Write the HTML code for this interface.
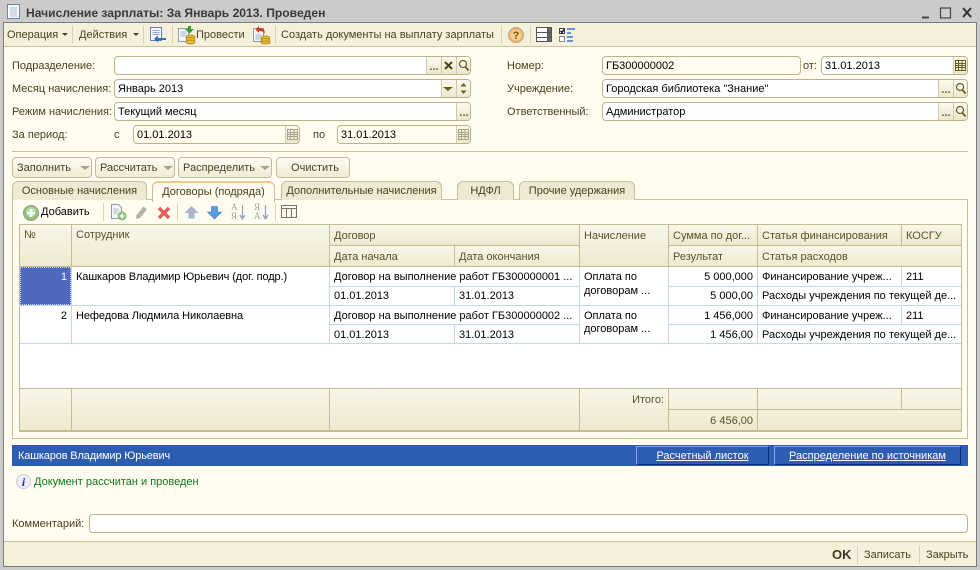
<!DOCTYPE html>
<html><head><meta charset="utf-8"><style>
html,body{margin:0;padding:0}
body{width:980px;height:570px;position:relative;overflow:hidden;background:#fffbef;font:11px/14px "Liberation Sans",Arial,sans-serif;color:#47431f}
.a{position:absolute}
.t{position:absolute;white-space:nowrap;line-height:14px}
.k{color:#000}
.h{color:#57512a}
.r{text-align:right}
.f{position:absolute;height:17px;background:#fff;border:1px solid #b9b28b;border-radius:4px;overflow:hidden;box-sizing:content-box}
.fb{position:absolute;top:0;height:17px;background:linear-gradient(#fbf9ee,#ece7cd);border-left:1px solid #cfc9a8;color:#6b5f20;text-align:center;line-height:17px;font-weight:bold}
.ft{position:absolute;left:3px;top:2px;white-space:nowrap;color:#000;line-height:14px}
.sep{position:absolute;width:1px;background:#d8d3b4}
.btn{position:absolute;top:157px;height:19px;border:1px solid #c2bb95;border-radius:4px;background:linear-gradient(#fdfbf2,#efebd6);line-height:21px;padding-left:4px;box-sizing:content-box;white-space:nowrap}
.btn i{position:absolute;right:1px;top:8px;border:5px solid transparent;border-top:4px solid #a9a487;border-bottom:0}
.tab{position:absolute;top:181px;height:18px;border:1px solid #c6bf9a;border-bottom:0;border-radius:6px 6px 0 0;background:#eee9d3;text-align:center;line-height:18px;color:#47431f;white-space:nowrap}
.hl{position:absolute;background:#c3bc94}
.bl{position:absolute;background:#c6d6ea}
.hd{position:absolute;background:linear-gradient(#f8f6ea,#eee8cd)}
svg{position:absolute;overflow:visible}
.lk{position:absolute;top:446px;height:17px;border:1px solid;border-color:#7ea6ee #0d2a78 #0d2a78 #7ea6ee;color:#fff;text-decoration:underline;text-align:center;line-height:19px;white-space:nowrap}
</style></head><body>

<!-- window frame -->
<div class="a" style="left:0;top:0;width:980px;height:22px;background:#cbcbcb"></div>
<div class="a" style="left:0;top:22px;width:3px;height:548px;background:#cbcbcb"></div>
<div class="a" style="left:977px;top:22px;width:3px;height:548px;background:#cbcbcb"></div>
<div class="a" style="left:3px;top:22px;width:1px;height:545px;background:#7b7b7b"></div>
<div class="a" style="left:976px;top:22px;width:1px;height:545px;background:#7b7b7b"></div>
<div class="a" style="left:3px;top:22px;width:974px;height:1px;background:#7b7b7b"></div>
<div class="a" style="left:0;top:566px;width:980px;height:4px;background:#cbcbcb"></div>
<div class="a" style="left:3px;top:566px;width:974px;height:1px;background:#7b7b7b"></div>

<svg style="left:7px;top:4px" width="14" height="15" viewBox="0 0 14 15"><rect x=".5" y=".5" width="12" height="14" fill="#f6f8fb" stroke="#6f87a6"/><path d="M3 4h7M3 6h7M3 8h7M3 10h7M3 12h7" stroke="#b3c1d2"/></svg>
<div class="t" style="left:26px;top:6px;font-weight:bold;font-size:12.1px;color:#3a3a3a">Начисление зарплаты: За Январь 2013. Проведен</div>
<svg style="left:920px;top:5px" width="52" height="14" viewBox="0 0 52 14"><path d="M2 12.5h7" stroke="#444" stroke-width="2"/><rect x="20.5" y="3" width="10" height="10" fill="none" stroke="#444" stroke-width="1.200"/><path d="M43 3l8 9M51 3l-8 9" stroke="#333" stroke-width="2"/></svg>

<!-- top toolbar -->
<div class="a" style="left:4px;top:23px;width:972px;height:23px;background:#f4f0dc"></div>
<div class="a" style="left:4px;top:46px;width:972px;height:1px;background:#c9c3a0"></div>
<div class="t" style="left:7px;top:28px">Операция</div>
<div class="a" style="left:62px;top:33px;border:3px solid transparent;border-top:3px solid #47431f;border-bottom:0"></div>
<div class="sep" style="left:72px;top:26px;height:18px"></div>
<div class="t" style="left:79px;top:28px">Действия</div>
<div class="a" style="left:133px;top:33px;border:3px solid transparent;border-top:3px solid #47431f;border-bottom:0"></div>
<div class="sep" style="left:143px;top:26px;height:18px"></div>
<svg style="left:150px;top:27px" width="17" height="17" viewBox="0 0 17 17"><rect x=".5" y=".5" width="11" height="13" fill="#f4f7fb" stroke="#5f7fa8"/><path d="M2.500 3.500h7M2.500 5.500h7M2.500 7.500h7" stroke="#8fa6c4"/><path d="M16 11H8V8.500L4 12l4 3.500V13h8z" fill="#2f70b8"/></svg>
<div class="sep" style="left:172px;top:26px;height:18px"></div>
<svg style="left:178px;top:26px" width="18" height="18" viewBox="0 0 18 18"><rect x=".5" y="2.500" width="10" height="13" fill="#f4f7fb" stroke="#8b9bb0"/><path d="M2.500 6h6M2.500 8h6M2.500 10h5" stroke="#a6b5c6"/><path d="M10 0h3v3h3l-4.500 4.500L7 3h3z" fill="#3f9a3a"/><ellipse cx="12.500" cy="11" rx="4.500" ry="2" fill="#e7bf3a" stroke="#a37e12" stroke-width=".7"/><ellipse cx="12.500" cy="13.500" rx="4.500" ry="2" fill="#e7bf3a" stroke="#a37e12" stroke-width=".7"/><ellipse cx="12.500" cy="16" rx="4.500" ry="2" fill="#e7bf3a" stroke="#a37e12" stroke-width=".7"/></svg>
<div class="t" style="left:196px;top:28px">Провести</div>
<svg style="left:253px;top:26px" width="18" height="18" viewBox="0 0 18 18"><rect x=".5" y="2.500" width="10" height="13" fill="#f4f7fb" stroke="#8b9bb0"/><path d="M2.500 9h6M2.500 11h6M2.500 13h5" stroke="#a6b5c6"/><path d="M6 0L2.500 3.500 6 7V5c3 0 5 1 5.500 3C12.500 4 10 2 6 2z" fill="#cf3a2c"/><ellipse cx="12.500" cy="12" rx="4.500" ry="2" fill="#e7bf3a" stroke="#a37e12" stroke-width=".7"/><ellipse cx="12.500" cy="14.500" rx="4.500" ry="2" fill="#e7bf3a" stroke="#a37e12" stroke-width=".7"/><ellipse cx="12.500" cy="16.500" rx="4.500" ry="1.500" fill="#e7bf3a" stroke="#a37e12" stroke-width=".7"/></svg>
<div class="sep" style="left:275px;top:26px;height:18px"></div>
<div class="t" style="left:281px;top:28px">Создать документы на выплату зарплаты</div>
<div class="sep" style="left:501px;top:26px;height:18px"></div>
<svg style="left:508px;top:27px" width="16" height="16" viewBox="0 0 16 16"><circle cx="8" cy="8" r="7.500" fill="#f0b46a" stroke="#b4a98a"/><circle cx="8" cy="8" r="5.500" fill="#f7cf8e"/><text x="8" y="12" text-anchor="middle" font-family="Liberation Sans" font-weight="bold" font-size="11" fill="#7a4c10">?</text></svg>
<div class="sep" style="left:530px;top:26px;height:18px"></div>
<svg style="left:536px;top:27px" width="16" height="16" viewBox="0 0 16 16"><rect x=".5" y=".5" width="15" height="14" fill="#fff" stroke="#555"/><path d="M0 5.500h16M0 10.500h16M11.500 0v15" stroke="#555"/><rect x="12" y="1" width="3" height="4" fill="#666"/><rect x="12" y="6" width="3" height="4" fill="#666"/><rect x="12" y="11" width="3" height="3" fill="#666"/></svg>
<svg style="left:559px;top:27px" width="17" height="16" viewBox="0 0 17 16"><rect x=".5" y="1.500" width="5" height="5" fill="#fff" stroke="#444"/><path d="M1.500 4l1.500 1.500L5 2.500" stroke="#000" fill="none" stroke-width="1.300"/><rect x=".5" y="9.500" width="5" height="5" fill="#fff" stroke="#888"/><path d="M8 2h8M8 6h4M8 10h6M8 14h6" stroke="#2f78d0" stroke-width="1.600"/></svg>

<!-- form labels -->
<div class="t" style="left:12px;top:59px">Подразделение:</div>
<div class="t" style="left:12px;top:82px">Месяц начисления:</div>
<div class="t" style="left:12px;top:105px">Режим начисления:</div>
<div class="t" style="left:12px;top:128px">За период:</div>
<div class="t" style="left:114px;top:128px">с</div>
<div class="t" style="left:313px;top:128px">по</div>
<div class="t" style="left:507px;top:59px">Номер:</div>
<div class="t" style="left:507px;top:82px">Учреждение:</div>
<div class="t" style="left:507px;top:105px">Ответственный:</div>
<div class="t" style="left:803px;top:59px">от:</div>

<!-- fields -->
<div class="f" style="left:114px;top:56px;width:355px">
 <div class="fb" style="left:311px;width:14px;line-height:21px">...</div>
 <div class="fb" style="left:326px;width:14px"></div>
 <div class="fb" style="left:341px;width:14px"></div>
 <svg style="left:329px;top:4px" width="9" height="9"><path d="M1 1l7 7M8 1l-7 7" stroke="#4c4418" stroke-width="2"/></svg>
 <svg style="left:343px;top:2px" width="12" height="13"><circle cx="5" cy="5" r="3.500" fill="#fff" stroke="#6b5f20" stroke-width="1.300"/><path d="M7.500 8l3 3.500" stroke="#6b5f20" stroke-width="1.800"/></svg>
</div>
<div class="f" style="left:114px;top:79px;width:355px"><div class="ft">Январь 2013</div>
 <div class="fb" style="left:326px;width:14px"></div>
 <div class="fb" style="left:341px;width:14px"></div>
 <div class="a" style="left:328px;top:7px;border:5px solid transparent;border-top:4px solid #6b5f20;border-bottom:0"></div>
 <svg style="left:344px;top:2px" width="9" height="13"><path d="M4.500 1l3 3.500h-6zM4.500 12l3-3.500h-6z" fill="#6b5f20"/></svg>
</div>
<div class="f" style="left:114px;top:102px;width:355px"><div class="ft">Текущий месяц</div>
 <div class="fb" style="left:341px;width:14px;line-height:21px">...</div>
</div>
<div class="f" style="left:133px;top:125px;width:165px;background:#fffbef"><div class="ft">01.01.2013</div>
 <div class="fb" style="left:151px;width:14px"></div>
 <svg style="left:153px;top:3px" width="11" height="11"><path d="M.5.500h10v10H.5zM0 3.500h11M0 5.500h11M0 7.500h11M3.500 1v10M7 1v10" fill="none" stroke="#a8a388"/></svg>
</div>
<div class="f" style="left:337px;top:125px;width:132px;background:#fffbef"><div class="ft">31.01.2013</div>
 <div class="fb" style="left:118px;width:14px"></div>
 <svg style="left:120px;top:3px" width="11" height="11"><path d="M.5.500h10v10H.5zM0 3.500h11M0 5.500h11M0 7.500h11M3.500 1v10M7 1v10" fill="none" stroke="#a8a388"/></svg>
</div>
<div class="f" style="left:602px;top:56px;width:197px;background:#fffbef"><div class="ft">ГБ300000002</div></div>
<div class="f" style="left:821px;top:56px;width:145px"><div class="ft">31.01.2013</div>
 <div class="fb" style="left:131px;width:14px"></div>
 <svg style="left:133px;top:3px" width="11" height="11"><path d="M.5.500h10v10H.5zM0 3.500h11M0 5.500h11M0 7.500h11M3.500 1v10M7 1v10" fill="none" stroke="#6b5f20"/></svg>
</div>
<div class="f" style="left:602px;top:79px;width:364px"><div class="ft">Городская библиотека "Знание"</div>
 <div class="fb" style="left:335px;width:14px;line-height:21px">...</div>
 <div class="fb" style="left:350px;width:14px"></div>
 <svg style="left:352px;top:2px" width="12" height="13"><circle cx="5" cy="5" r="3.500" fill="#fff" stroke="#6b5f20" stroke-width="1.300"/><path d="M7.500 8l3 3.500" stroke="#6b5f20" stroke-width="1.800"/></svg>
</div>
<div class="f" style="left:602px;top:102px;width:364px"><div class="ft">Администратор</div>
 <div class="fb" style="left:335px;width:14px;line-height:21px">...</div>
 <div class="fb" style="left:350px;width:14px"></div>
 <svg style="left:352px;top:2px" width="12" height="13"><circle cx="5" cy="5" r="3.500" fill="#fff" stroke="#6b5f20" stroke-width="1.300"/><path d="M7.500 8l3 3.500" stroke="#6b5f20" stroke-width="1.800"/></svg>
</div>

<div class="a" style="left:12px;top:151px;width:956px;height:1px;background:#c6bf9a"></div>

<!-- buttons -->
<div class="btn" style="left:12px;width:74px">Заполнить<i></i></div>
<div class="btn" style="left:95px;width:74px">Рассчитать<i></i></div>
<div class="btn" style="left:178px;width:88px">Распределить<i></i></div>
<div class="btn" style="left:276px;width:68px;padding-left:4px;text-align:center">Очистить</div>

<!-- tabs -->
<div class="a" style="left:12px;top:199px;width:954px;height:238px;border:1px solid #c6bf9a"></div>
<div class="tab" style="left:12px;width:133px">Основные начисления</div>
<div class="tab" style="left:281px;width:159px">Дополнительные начисления</div>
<div class="tab" style="left:457px;width:55px">НДФЛ</div>
<div class="tab" style="left:519px;width:114px">Прочие удержания</div>
<div class="tab" style="left:152px;width:121px;height:19px;background:#fffbef;border-top:2px solid #f2c98a;top:181px;line-height:18px">Договоры (подряда)</div>

<!-- table toolbar -->
<svg style="left:23px;top:205px" width="16" height="16" viewBox="0 0 16 16"><circle cx="8" cy="8" r="7.500" fill="#8fc47e" stroke="#9a9a86"/><circle cx="8" cy="7" r="5" fill="#b5dca6"/><path d="M8 4v8M4 8h8" stroke="#fff" stroke-width="2.600"/></svg>
<div class="t k" style="left:41px;top:205px"><u>Д</u>обавить</div>
<div class="sep" style="left:103px;top:203px;height:18px"></div>
<svg style="left:111px;top:204px" width="16" height="17" viewBox="0 0 16 17"><path d="M.5.500h7l3 3v11H.5z" fill="#f3f5f8" stroke="#8d9cb0"/><path d="M2.500 5h5M2.500 7h5M2.500 9h4" stroke="#a9b6c6"/><circle cx="11" cy="12" r="4.500" fill="#86bd76"/><path d="M11 9.500v5M8.500 12h5" stroke="#fff" stroke-width="1.600"/></svg>
<svg style="left:135px;top:205px" width="13" height="15" viewBox="0 0 13 15"><path d="M8.500 1.500l3.500 3-7 8.500-4 1 .5-4z" fill="#b3b5a3"/></svg>
<svg style="left:157px;top:206px" width="14" height="14" viewBox="0 0 14 14"><path d="M2 2l10 10M12 2L2 12" stroke="#e2605a" stroke-width="3.400"/></svg>
<div class="sep" style="left:177px;top:203px;height:18px"></div>
<svg style="left:184px;top:205px" width="15" height="15" viewBox="0 0 15 15"><path d="M7.500 1L14.500 8H10.500v5.500h-6V8H.5z" fill="#a5b8ca"/></svg>
<svg style="left:207px;top:205px" width="15" height="15" viewBox="0 0 15 15"><path d="M7.500 14L14.500 7H10.500V1.500h-6V7H.5z" fill="#5a9be0" stroke="#4077b8" stroke-width=".6"/></svg>
<div class="t" style="left:231px;top:203px;font:9px/9px 'Liberation Serif',serif;color:#a89e9e">А<br>Я</div>
<svg style="left:239px;top:205px" width="7" height="16"><path d="M3.500 0v13M1 10l2.500 4L6 10" fill="none" stroke="#8aa2bd" stroke-width="1.200"/></svg>
<div class="t" style="left:254px;top:203px;font:9px/9px 'Liberation Serif',serif;color:#a89e9e">Я<br>А</div>
<svg style="left:262px;top:205px" width="7" height="16"><path d="M3.500 0v13M1 10l2.500 4L6 10" fill="none" stroke="#8aa2bd" stroke-width="1.200"/></svg>
<div class="sep" style="left:275px;top:203px;height:18px"></div>
<svg style="left:281px;top:205px" width="17" height="14" viewBox="0 0 17 14"><path d="M.5.500h15v12H.5zM.5 3.500h15M5.500 3.500v9M10.500 3.500v9" fill="#fff8ea" stroke="#777566"/></svg>

<!-- table -->
<div class="a" style="left:19px;top:224px;width:941px;height:206px;border:1px solid #c3bc94;background:#fff"></div>
<!-- header backgrounds -->
<div class="hd" style="left:20px;top:225px;width:941px;height:42px"></div>
<div class="hd" style="left:330px;top:225px;width:249px;height:20px"></div>
<div class="hd" style="left:330px;top:246px;width:249px;height:21px"></div>
<div class="hd" style="left:669px;top:225px;width:292px;height:20px"></div>
<div class="hd" style="left:669px;top:246px;width:292px;height:21px"></div>
<div class="hl" style="left:71px;top:225px;width:1px;height:42px"></div>
<div class="hl" style="left:329px;top:225px;width:1px;height:42px"></div>
<div class="hl" style="left:454px;top:245px;width:1px;height:22px"></div>
<div class="hl" style="left:579px;top:225px;width:1px;height:42px"></div>
<div class="hl" style="left:668px;top:225px;width:1px;height:42px"></div>
<div class="hl" style="left:757px;top:225px;width:1px;height:42px"></div>
<div class="hl" style="left:901px;top:225px;width:1px;height:20px"></div>
<div class="hl" style="left:329px;top:245px;width:250px;height:1px"></div>
<div class="hl" style="left:668px;top:245px;width:293px;height:1px"></div>
<div class="hl" style="left:20px;top:266px;width:941px;height:1px"></div>

<div class="t h" style="left:24px;top:228px">№</div>
<div class="t h" style="left:76px;top:228px">Сотрудник</div>
<div class="t h" style="left:334px;top:229px">Договор</div>
<div class="t h" style="left:334px;top:250px">Дата начала</div>
<div class="t h" style="left:459px;top:250px">Дата окончания</div>
<div class="t h" style="left:584px;top:229px">Начисление</div>
<div class="t h" style="left:673px;top:229px">Сумма по дог...</div>
<div class="t h" style="left:673px;top:250px">Результат</div>
<div class="t h" style="left:762px;top:229px">Статья финансирования</div>
<div class="t h" style="left:762px;top:250px">Статья расходов</div>
<div class="t h" style="left:906px;top:229px">КОСГУ</div>

<!-- body grid -->
<div class="bl" style="left:20px;top:305px;width:941px;height:1px"></div>
<div class="bl" style="left:20px;top:343px;width:941px;height:1px"></div>
<div class="bl" style="left:329px;top:286px;width:250px;height:1px"></div>
<div class="bl" style="left:329px;top:324px;width:250px;height:1px"></div>
<div class="bl" style="left:668px;top:286px;width:293px;height:1px"></div>
<div class="bl" style="left:668px;top:324px;width:293px;height:1px"></div>
<div class="bl" style="left:71px;top:267px;width:1px;height:76px"></div>
<div class="bl" style="left:329px;top:267px;width:1px;height:76px"></div>
<div class="bl" style="left:579px;top:267px;width:1px;height:76px"></div>
<div class="bl" style="left:668px;top:267px;width:1px;height:76px"></div>
<div class="bl" style="left:757px;top:267px;width:1px;height:76px"></div>
<div class="bl" style="left:454px;top:286px;width:1px;height:19px"></div>
<div class="bl" style="left:454px;top:324px;width:1px;height:19px"></div>
<div class="bl" style="left:901px;top:267px;width:1px;height:19px"></div>
<div class="bl" style="left:901px;top:305px;width:1px;height:19px"></div>

<div class="a" style="left:20px;top:267px;width:49px;height:36px;background:#4f69bf;border:1px dotted #c9d2ee"></div>
<div class="t r" style="left:20px;top:270px;width:47px;color:#fff">1</div>
<div class="t k r" style="left:20px;top:309px;width:47px">2</div>

<div class="t k" style="left:76px;top:270px;letter-spacing:-.1px">Кашкаров Владимир Юрьевич (дог. подр.)</div>
<div class="t k" style="left:76px;top:309px;letter-spacing:-.07px">Нефедова Людмила Николаевна</div>
<div class="t k" style="left:334px;top:270px">Договор на выполнение работ ГБ300000001 ...</div>
<div class="t k" style="left:334px;top:309px">Договор на выполнение работ ГБ300000002 ...</div>
<div class="t k" style="left:334px;top:289px">01.01.2013</div>
<div class="t k" style="left:459px;top:289px">31.01.2013</div>
<div class="t k" style="left:334px;top:328px">01.01.2013</div>
<div class="t k" style="left:459px;top:328px">31.01.2013</div>
<div class="t k" style="left:584px;top:270px">Оплата по</div>
<div class="t k" style="left:584px;top:284px">договорам ...</div>
<div class="t k" style="left:584px;top:309px">Оплата по</div>
<div class="t k" style="left:584px;top:322px">договорам ...</div>
<div class="t k r" style="left:669px;top:270px;width:84px">5 000,000</div>
<div class="t k r" style="left:669px;top:289px;width:84px">5 000,00</div>
<div class="t k r" style="left:669px;top:309px;width:84px">1 456,000</div>
<div class="t k r" style="left:669px;top:328px;width:84px">1 456,00</div>
<div class="t k" style="left:762px;top:270px">Финансирование учреж...</div>
<div class="t k" style="left:762px;top:289px">Расходы учреждения по текущей де...</div>
<div class="t k" style="left:762px;top:309px">Финансирование учреж...</div>
<div class="t k" style="left:762px;top:328px">Расходы учреждения по текущей де...</div>
<div class="t k" style="left:906px;top:270px">211</div>
<div class="t k" style="left:906px;top:309px">211</div>

<!-- footer -->
<div class="hd" style="left:20px;top:388px;width:941px;height:42px"></div>
<div class="hl" style="left:20px;top:388px;width:941px;height:1px"></div>
<div class="hl" style="left:71px;top:388px;width:1px;height:42px"></div>
<div class="hl" style="left:329px;top:388px;width:1px;height:42px"></div>
<div class="hl" style="left:579px;top:388px;width:1px;height:42px"></div>
<div class="hl" style="left:668px;top:388px;width:1px;height:42px"></div>
<div class="hl" style="left:757px;top:388px;width:1px;height:42px"></div>
<div class="hl" style="left:901px;top:388px;width:1px;height:21px"></div>
<div class="hl" style="left:668px;top:409px;width:293px;height:1px"></div>
<div class="hl" style="left:20px;top:430px;width:941px;height:1px"></div>
<div class="t h r" style="left:580px;top:393px;width:84px">Итого:</div>
<div class="t h r" style="left:669px;top:414px;width:84px">6 456,00</div>

<!-- blue bar -->
<div class="a" style="left:12px;top:445px;width:956px;height:21px;background:#2d5db0"></div>
<div class="t" style="left:18px;top:449px;color:#fff;letter-spacing:-.15px">Кашкаров Владимир Юрьевич</div>
<div class="lk" style="left:636px;width:131px">Расчетный листок</div>
<div class="lk" style="left:774px;width:185px">Распределение по источникам</div>

<!-- info -->
<svg style="left:16px;top:474px" width="15" height="15" viewBox="0 0 15 15"><circle cx="7.500" cy="7.500" r="7" fill="#eef0f6" stroke="#c9ccd6"/><text x="7.500" y="12" text-anchor="middle" font-family="Liberation Serif" font-style="italic" font-weight="bold" font-size="12" fill="#1c2fd0">i</text></svg>
<div class="t" style="left:34px;top:475px;color:#0b7a1e">Документ рассчитан и проведен</div>

<div class="t" style="left:12px;top:517px">Комментарий:</div>
<div class="f" style="left:89px;top:514px;width:877px"></div>

<!-- bottom bar -->
<div class="a" style="left:4px;top:541px;width:972px;height:1px;background:#c6bf9a"></div>
<div class="a" style="left:4px;top:542px;width:972px;height:24px;background:#f4f0dc"></div>
<div class="t" style="left:832px;top:548px;font-weight:bold;font-size:13px;color:#3d3a1c">OK</div>
<div class="sep" style="left:857px;top:546px;height:18px"></div>
<div class="t" style="left:864px;top:548px">Записать</div>
<div class="sep" style="left:919px;top:546px;height:18px"></div>
<div class="t" style="left:926px;top:548px">Закрыть</div>
</body></html>
